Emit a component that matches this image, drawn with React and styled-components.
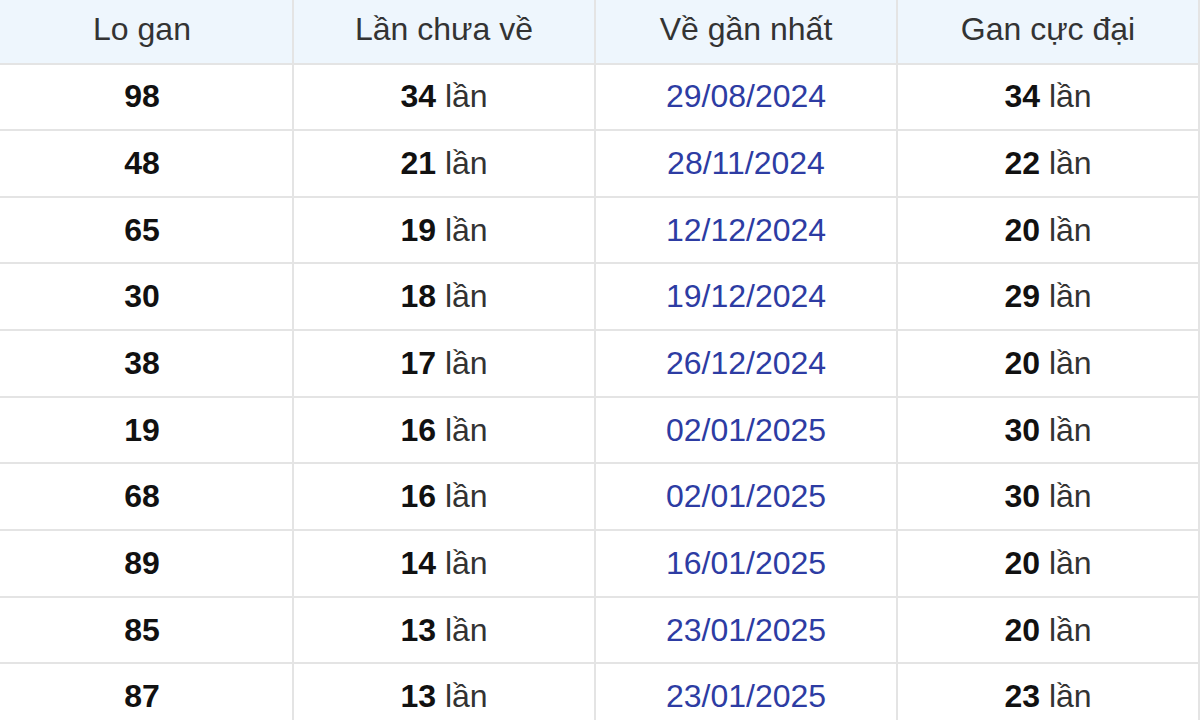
import React from "react";
import styled, { createGlobalStyle } from "styled-components";

const Global = createGlobalStyle`
  html, body {
    margin: 0;
    padding: 0;
    background: #ffffff;
    overflow: hidden;
    font-family: "Liberation Sans", Arial, sans-serif;
  }
`;

const Frame = styled.div`
  width: 1200px;
  height: 720px;
  overflow: hidden;
`;

const Grid = styled.div`
  display: grid;
  grid-template-columns: repeat(4, 302px);
  grid-auto-rows: 66.67px;
  grid-template-rows: 64.5px;
  margin-left: -8px;
  width: 1208px;
`;

const Cell = styled.div`
  box-sizing: border-box;
  display: flex;
  align-items: center;
  justify-content: center;
  border-right: 2px solid #e4e4e4;
  border-bottom: 2px solid #e4e4e4;
  font-size: 32px;
  color: #333333;
  background: ${(p) => (p.$head ? "#eef6fd" : "#ffffff")};
  padding-bottom: ${(p) => (p.$head ? "3px" : "0")};
`;

const Bold = styled.b`
  font-weight: 700;
  color: #111111;
`;

const Date = styled.span`
  color: #2d3ca3;
`;

const Count = styled.span`
  white-space: pre;
`;

const rows = [
  ["98", "34", "29/08/2024", "34"],
  ["48", "21", "28/11/2024", "22"],
  ["65", "19", "12/12/2024", "20"],
  ["30", "18", "19/12/2024", "29"],
  ["38", "17", "26/12/2024", "20"],
  ["19", "16", "02/01/2025", "30"],
  ["68", "16", "02/01/2025", "30"],
  ["89", "14", "16/01/2025", "20"],
  ["85", "13", "23/01/2025", "20"],
  ["87", "13", "23/01/2025", "23"],
];

const headers = ["Lo gan", "Lần chưa về", "Về gần nhất", "Gan cực đại"];

function Times({ n }) {
  return (
    <Count>
      <Bold>{n}</Bold> lần
    </Count>
  );
}

export default function App() {
  return (
    <>
      <Global />
      <Frame>
        <Grid>
          {headers.map((h) => (
            <Cell key={h} $head>
              {h}
            </Cell>
          ))}
          {rows.map((r, i) => (
            <React.Fragment key={i}>
              <Cell>
                <Bold>{r[0]}</Bold>
              </Cell>
              <Cell>
                <Times n={r[1]} />
              </Cell>
              <Cell>
                <Date>{r[2]}</Date>
              </Cell>
              <Cell>
                <Times n={r[3]} />
              </Cell>
            </React.Fragment>
          ))}
        </Grid>
      </Frame>
    </>
  );
}
